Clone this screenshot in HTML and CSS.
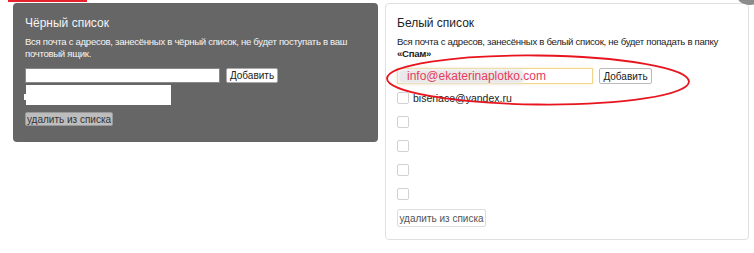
FILE: index.html
```html
<!DOCTYPE html>
<html lang="ru">
<head>
    <meta charset="UTF-8">
    <title>Списки адресов</title>
    <link rel="stylesheet" href="styles.css">
</head>
<body>
    <div class="top-mark"></div>
    <main class="lists">
        <section class="panel panel-black">
            <h2>Чёрный список</h2>
            <p class="desc">Вся почта с адресов, занесённых в чёрный список, не будет поступать в ваш<br>почтовый ящик.</p>
            <div class="add-row">
                <input type="text" class="field field-wide">
                <button class="btn-add">Добавить</button>
            </div>
            <div class="blank-box"></div>
            <button class="btn-remove">удалить из списка</button>
        </section>

        <section class="panel panel-white">
            <h2>Белый список</h2>
            <p class="desc">Вся почта с адресов, занесённых в белый список, не будет попадать в папку<br><b>«Спам»</b></p>
            <div class="add-row">
                <div class="field field-focus"><span class="smudge"></span><span class="email">info@ekaterinaplotko.com</span></div>
                <button class="btn-add">Добавить</button>
            </div>
            <ul class="addr-list">
                <li><span class="check"></span>biseriace@yandex.ru</li>
                <li><span class="check"></span></li>
                <li><span class="check"></span></li>
                <li><span class="check"></span></li>
                <li><span class="check"></span></li>
            </ul>
            <button class="btn-remove">удалить из списка</button>
            <svg class="ring" width="310" height="56" viewBox="0 0 310 56">
                <ellipse cx="155" cy="27" rx="151" ry="24.5" fill="none" stroke="#e8141e" stroke-width="1.8" transform="rotate(0.6 155 27)"/>
            </svg>
        </section>
    </main>
    <svg class="corner-dot" width="20" height="7" viewBox="0 0 20 7">
        <ellipse cx="16" cy="-8" rx="15" ry="13" fill="#8c8c8c"/>
    </svg>
</body>
</html>
```

FILE: styles.css
```css
body {
    margin: 0;
    font-family: "Liberation Sans", Arial, sans-serif;
    background-color: #fff;
    color: #222;
    position: relative;
    height: 253px;
    overflow: hidden;
}

.top-mark {
    position: absolute;
    left: 8px;
    top: 0;
    width: 79px;
    height: 2px;
    background-color: #e5222b;
}

.corner-dot {
    position: absolute;
    left: 734px;
    top: 0;
}

.lists {
    display: flex;
    align-items: flex-start;
    gap: 7px;
    padding: 3px 0 0 13px;
}

.panel {
    box-sizing: border-box;
    border-radius: 4px;
    padding: 13px 12px 0 12px;
    position: relative;
}

.panel h2 {
    margin: 0;
    font-size: 12px;
    font-weight: normal;
    line-height: 14px;
}

.desc {
    margin: 6px 0 0 0;
    font-size: 9.6px;
    line-height: 12px;
    letter-spacing: -0.3px;
    white-space: nowrap;
}

.panel-black {
    width: 365px;
    height: 139px;
    background-color: #666;
    color: #f4f4f4;
}

.panel-white {
    width: 364px;
    height: 237px;
    background-color: #fff;
    border: 1px solid #e0e0e0;
    padding-left: 11px;
    padding-top: 12px;
}

.add-row {
    display: flex;
    gap: 6px;
    margin-top: 8px;
    height: 15px;
}

.field {
    box-sizing: border-box;
    margin: 0;
    height: 15px;
    border: 1px solid #888;
    background-color: #fff;
    padding: 0;
}

.field-wide {
    width: 195px;
}

.btn-add {
    box-sizing: border-box;
    height: 15px;
    width: 52px;
    padding: 0;
    font-family: "Liberation Sans", Arial, sans-serif;
    font-size: 10px;
    color: #222;
    background-color: #fff;
    border: 1px solid #aaa;
    border-radius: 2px;
}

.blank-box {
    width: 145px;
    height: 20px;
    margin: 2px 0 0 1px;
    background-color: #fff;
    position: relative;
}

.blank-box::before {
    content: "";
    position: absolute;
    left: -2px;
    top: 9px;
    width: 2px;
    height: 6px;
    background-color: #fff;
}

.panel-black .btn-remove {
    margin-top: 7px;
    width: 88px;
    height: 14px;
    background-color: #bdbdbd;
    border: 1px solid #999;
    color: #333;
}

.btn-remove {
    display: block;
    box-sizing: border-box;
    padding: 0;
    font-family: "Liberation Sans", Arial, sans-serif;
    font-size: 10px;
    border-radius: 2px;
}

.panel-white .add-row {
    height: 16px;
    margin-top: 8px;
}

.field-focus {
    width: 196px;
    height: 16px;
    border-color: #eed68c;
    box-shadow: 0 0 2px rgba(240, 200, 80, 0.45);
    position: relative;
    display: flex;
    align-items: center;
    padding-left: 9px;
}

.smudge {
    position: absolute;
    left: 2px;
    top: 2px;
    width: 122px;
    height: 11px;
    background-color: #e9e9e9;
    box-shadow: 0 0 4px 2px #e9e9e9;
    border-radius: 3px;
}

.email {
    position: relative;
    font-size: 12px;
    color: #e83b5c;
    line-height: 14px;
}

.panel-white .btn-add {
    height: 16px;
    width: 53px;
    border-color: #bbb;
}

.addr-list {
    list-style: none;
    margin: 8px 0 0 0;
    padding: 0;
}

.addr-list li {
    display: flex;
    align-items: center;
    height: 12px;
    margin-bottom: 12px;
    font-size: 10.5px;
    color: #222;
}

.check {
    box-sizing: border-box;
    width: 12px;
    height: 12px;
    border: 1px solid #d2d2d2;
    border-radius: 2px;
    margin-right: 4px;
}

.panel-white .btn-remove {
    margin-top: -3px;
    width: 89px;
    height: 18px;
    background-color: #fff;
    border: 1px solid #ddd;
    color: #555;
}

.ring {
    position: absolute;
    left: -3px;
    top: 49px;
}
```
